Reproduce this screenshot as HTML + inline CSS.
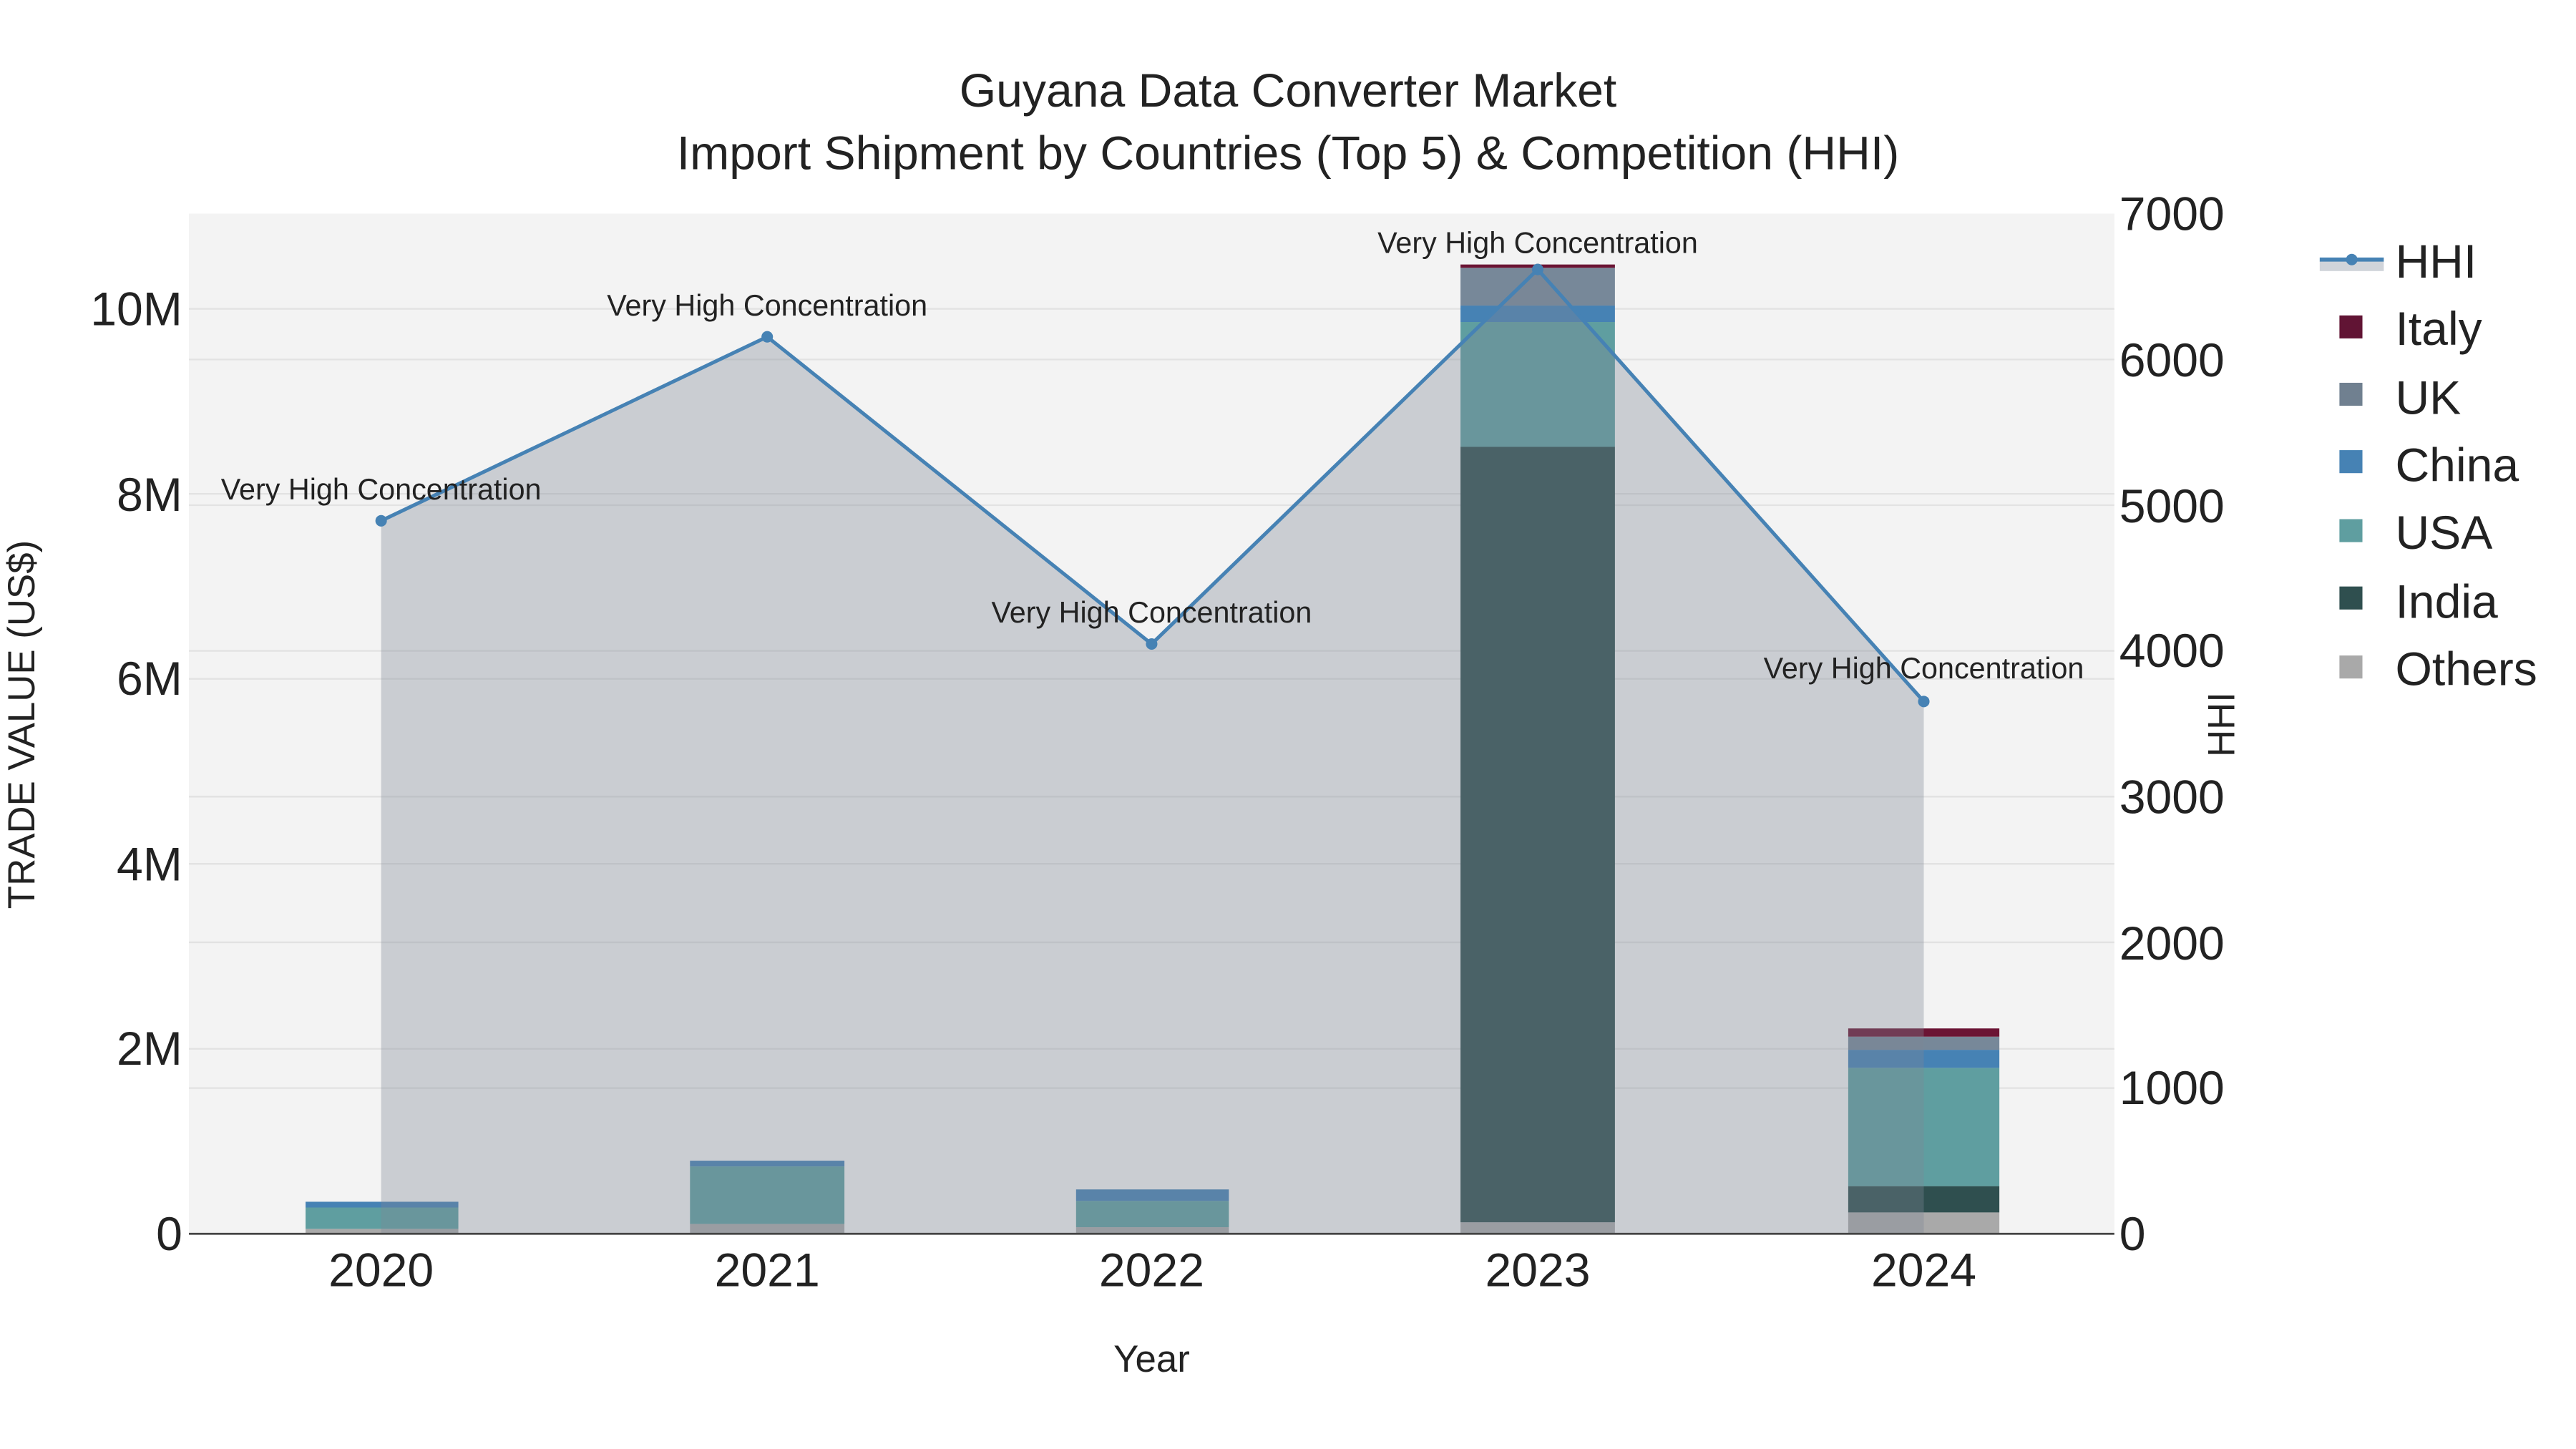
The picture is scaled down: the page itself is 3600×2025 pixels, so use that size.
<!DOCTYPE html>
<html><head><meta charset="utf-8"><style>
html,body{margin:0;padding:0;background:#fff;}
svg{display:block;}
text{font-family:"Liberation Sans",sans-serif;fill:#222;}
</style></head><body>
<svg width="3600" height="2025" viewBox="0 0 1568 882" preserveAspectRatio="none" xmlns="http://www.w3.org/2000/svg">
<rect x="0" y="0" width="1568" height="882" fill="#fff"/>
<rect x="115" y="130" width="1172" height="621" fill="#f3f3f3"/>
<g stroke="#e2e2e2" stroke-width="1">
<line x1="115" x2="1287" y1="638.4" y2="638.4"/><line x1="115" x2="1287" y1="525.8" y2="525.8"/>
<line x1="115" x2="1287" y1="413.2" y2="413.2"/><line x1="115" x2="1287" y1="300.6" y2="300.6"/>
<line x1="115" x2="1287" y1="188" y2="188"/>
<line x1="115" x2="1287" y1="662.3" y2="662.3"/><line x1="115" x2="1287" y1="573.6" y2="573.6"/>
<line x1="115" x2="1287" y1="484.9" y2="484.9"/><line x1="115" x2="1287" y1="396.2" y2="396.2"/>
<line x1="115" x2="1287" y1="307.5" y2="307.5"/><line x1="115" x2="1287" y1="218.8" y2="218.8"/>
</g>
<g>
<rect x="186" y="748" width="93" height="3" fill="#a9a9a9"/>
<rect x="186" y="735" width="93" height="13" fill="#5f9ea0"/>
<rect x="186" y="731.5" width="93" height="3.5" fill="#4682b4"/>
<rect x="420" y="745" width="94" height="6" fill="#a9a9a9"/>
<rect x="420" y="710" width="94" height="35" fill="#5f9ea0"/>
<rect x="420" y="706.5" width="94" height="3.5" fill="#4682b4"/>
<rect x="655" y="747" width="93" height="4" fill="#a9a9a9"/>
<rect x="655" y="731" width="93" height="16" fill="#5f9ea0"/>
<rect x="655" y="724" width="93" height="7" fill="#4682b4"/>
<rect x="889" y="744" width="94" height="7" fill="#a9a9a9"/>
<rect x="889" y="272" width="94" height="472" fill="#2f4f4f"/>
<rect x="889" y="196" width="94" height="76" fill="#5f9ea0"/>
<rect x="889" y="186" width="94" height="10" fill="#4682b4"/>
<rect x="889" y="163" width="94" height="23" fill="#778899"/>
<rect x="889" y="161" width="94" height="2" fill="#6b1434"/>
<rect x="1125" y="738" width="92" height="13" fill="#a9a9a9"/>
<rect x="1125" y="722" width="92" height="16" fill="#2f4f4f"/>
<rect x="1125" y="650" width="92" height="72" fill="#5f9ea0"/>
<rect x="1125" y="639" width="92" height="11" fill="#4682b4"/>
<rect x="1125" y="631" width="92" height="8" fill="#778899"/>
<rect x="1125" y="626" width="92" height="5" fill="#6b1434"/>
</g>
<polygon points="232,751 232,317 467,205 701,392 936,164 1171,427 1171,751" fill="#7d8796" fill-opacity="0.35"/>
<polyline points="232,317 467,205 701,392 936,164 1171,427" fill="none" stroke="#4682b4" stroke-width="2.2"/>
<g fill="#4682b4">
<circle cx="232" cy="317" r="3.5"/><circle cx="467" cy="205" r="3.5"/><circle cx="701" cy="392" r="3.5"/>
<circle cx="936" cy="164" r="3.5"/><circle cx="1171" cy="427" r="3.5"/>
</g>
<line x1="115" x2="1287" y1="751" y2="751" stroke="#444" stroke-width="1.2"/>
<g font-size="18" text-anchor="middle">
<text x="232" y="304">Very High Concentration</text>
<text x="467" y="192">Very High Concentration</text>
<text x="701" y="379">Very High Concentration</text>
<text x="936" y="154">Very High Concentration</text>
<text x="1171" y="413">Very High Concentration</text>
</g>
<g font-size="28.8" text-anchor="middle">
<text x="784" y="65">Guyana Data Converter Market</text>
<text x="784" y="103">Import Shipment by Countries (Top 5) &amp; Competition (HHI)</text>
</g>
<g font-size="28.8" text-anchor="end">
<text x="111" y="761">0</text><text x="111" y="648">2M</text><text x="111" y="536">4M</text>
<text x="111" y="423">6M</text><text x="111" y="311">8M</text><text x="111" y="198">10M</text>
</g>
<g font-size="28.8" text-anchor="start">
<text x="1290" y="761">0</text><text x="1290" y="672">1000</text><text x="1290" y="584">2000</text>
<text x="1290" y="495">3000</text><text x="1290" y="406">4000</text><text x="1290" y="318">5000</text>
<text x="1290" y="229">6000</text><text x="1290" y="140">7000</text>
</g>
<g font-size="28.8" text-anchor="middle">
<text x="232" y="783">2020</text><text x="467" y="783">2021</text><text x="701" y="783">2022</text>
<text x="936" y="783">2023</text><text x="1171" y="783">2024</text>
</g>
<text x="701" y="835" font-size="23" text-anchor="middle">Year</text>
<text transform="translate(21,441) rotate(-90)" font-size="23" text-anchor="middle">TRADE VALUE (US$)</text>
<text transform="translate(1360,441) rotate(-90)" font-size="23" text-anchor="middle">HHI</text>
<rect x="1412" y="159" width="39" height="6" fill="#d0d4da"/>
<line x1="1412" x2="1451" y1="158" y2="158" stroke="#4682b4" stroke-width="2.5"/>
<circle cx="1431.5" cy="158" r="3.5" fill="#4682b4"/>
<g font-size="28.8">
<text x="1458" y="169">HHI</text>
<text x="1458" y="210">Italy</text>
<text x="1458" y="252">UK</text>
<text x="1458" y="293">China</text>
<text x="1458" y="334">USA</text>
<text x="1458" y="376">India</text>
<text x="1458" y="417">Others</text>
</g>
<rect x="1424" y="192" width="14" height="14" fill="#611434"/>
<rect x="1424" y="233" width="14" height="14" fill="#708090"/>
<rect x="1424" y="274" width="14" height="14" fill="#4682b4"/>
<rect x="1424" y="316" width="14" height="14" fill="#5f9ea0"/>
<rect x="1424" y="357" width="14" height="14" fill="#2f4f4f"/>
<rect x="1424" y="399" width="14" height="14" fill="#a9a9a9"/>
</svg>
</body></html>
